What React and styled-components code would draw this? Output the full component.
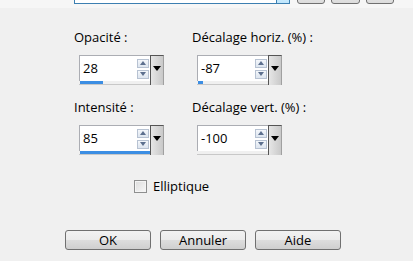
import React from "react";
import styled, { createGlobalStyle } from "styled-components";

const Global = createGlobalStyle`
  html, body {
    margin: 0;
    padding: 0;
    background: #f0f0f0;
    font-family: "Open Sans", "Noto Sans", "DejaVu Sans", sans-serif;
    font-size: 13px;
    color: #000;
  }
`;

const Page = styled.div`
  width: 413px;
  height: 261px;
  overflow: hidden;
  background: #f0f0f0;
  display: flex;
  flex-direction: column;
`;

const TopStrip = styled.div`
  height: 8px;
  background: #f6f6f6;
  display: flex;
  padding-left: 74px;
`;

const TopRow = styled.div`
  display: flex;
  align-self: flex-start;
  margin-top: -17px;
  gap: 7px;
`;

const TopCombo = styled.div`
  width: 214px;
  height: 19px;
  border: 1px solid #3c7fb1;
  background: #fff;
  display: flex;
  justify-content: flex-end;
`;

const TopComboBtn = styled.div`
  width: 12px;
  border-left: 1px solid #3c7fb1;
  background: linear-gradient(#eaf6fd, #bee6fd);
`;

const TopBtns = styled.div`
  display: flex;
  gap: 6px;
`;

const TopBtn = styled.div`
  width: ${(p) => p.w}px;
  height: 19px;
  border: 1px solid #707070;
  border-radius: 3px;
  background: linear-gradient(#f2f2f2, #dcdcdc);
`;

const Form = styled.div`
  padding: 21px 0 0 74px;
  display: grid;
  grid-template-columns: 118px 118px;
  row-gap: 14px;
`;

const Field = styled.div`
  display: flex;
  flex-direction: column;
`;

const Label = styled.div`
  line-height: 16px;
  height: 16px;
  margin-bottom: 10px;
  white-space: nowrap;
`;

const Spin = styled.div`
  margin-left: 5px;
  width: 85px;
  height: 30px;
  display: flex;
  flex-direction: column;
  box-sizing: border-box;
  border-bottom: 1px solid #c8c8c8;
`;

const SpinTop = styled.div`
  display: flex;
  height: 26px;
`;

const Box = styled.div`
  flex: 1;
  display: flex;
  align-items: center;
  background: #fff;
  border: 1px solid #abadb3;
  border-right: none;
  border-bottom: none;
  padding-left: 3px;
`;

const Value = styled.span`
  flex: 1;
  line-height: 16px;
  margin-top: -2px;
`;

const Arrows = styled.div`
  width: 12px;
  display: flex;
  flex-direction: column;
  gap: 2px;
  margin-right: 1px;
`;

const ArrowBtn = styled.div`
  height: 9px;
  border: 1px solid #b7c2d2;
  background: linear-gradient(#f4f7fb, #dde5ef);
  display: flex;
  align-items: center;
  justify-content: center;
  box-sizing: border-box;

  &::after {
    content: "";
    border-left: 3.5px solid transparent;
    border-right: 3.5px solid transparent;
    ${(p) =>
      p.up
        ? "border-bottom: 4px solid #5c6f8e;"
        : "border-top: 4px solid #5c6f8e;"}
  }
`;

const Drop = styled.div`
  width: 12px;
  height: 29px;
  margin-bottom: -3px;
  border-left: 1px solid #555;
  border-top: 1px solid #555;
  border-right: 1px solid #a0a0a0;
  background: linear-gradient(90deg, #e6e6e6, #c9c9c9);
  display: flex;
  align-items: center;
  justify-content: center;
  position: relative;
  z-index: 1;

  &::after {
    content: "";
    margin-top: -4px;
    border-left: 4px solid transparent;
    border-right: 4px solid transparent;
    border-top: 5px solid #000;
  }
`;

const Track = styled.div`
  height: 3px;
  margin-left: 1px;
  width: 83px;
`;

const Fill = styled.div`
  height: 3px;
  background: #3c8ee3;
`;

const CheckRow = styled.label`
  display: flex;
  align-items: center;
  gap: 6px;
  padding-left: 134px;
  margin-top: 23px;
  height: 16px;
`;

const CheckBox = styled.span`
  width: 11px;
  height: 11px;
  border: 1px solid #8e8f8f;
  background: linear-gradient(135deg, #dcdcdc, #f8f8f8);
  box-shadow: inset 0 0 0 1px #f4f4f4;
`;

const Buttons = styled.div`
  display: flex;
  gap: 9px;
  padding-left: 65px;
  margin-top: 36px;
`;

const Button = styled.button`
  width: 86px;
  height: 20px;
  border: 1px solid #707070;
  border-radius: 3px;
  background: linear-gradient(#f2f2f2 0%, #ebebeb 50%, #dddddd 51%, #cfcfcf 100%);
  font: inherit;
  line-height: 16px;
  padding: 0;
  color: #000;
`;

const fields = [
  { label: "Opacité :", value: "28", pct: 28 },
  { label: "Décalage horiz. (%) :", value: "-87", pct: 6.5 },
  { label: "Intensité :", value: "85", pct: 85 },
  { label: "Décalage vert. (%) :", value: "-100", pct: 0 },
];

function Spinner({ value, pct }) {
  return (
    <Spin>
      <SpinTop>
        <Box>
          <Value>{value}</Value>
          <Arrows>
            <ArrowBtn up />
            <ArrowBtn />
          </Arrows>
        </Box>
        <Drop />
      </SpinTop>
      <Track>
        <Fill style={{ width: `${pct}%` }} />
      </Track>
    </Spin>
  );
}

export default function App() {
  return (
    <Page>
      <Global />
      <TopStrip>
        <TopRow>
          <TopCombo>
            <TopComboBtn />
          </TopCombo>
          <TopBtns>
            <TopBtn w={26} />
            <TopBtn w={27} />
            <TopBtn w={26} />
          </TopBtns>
        </TopRow>
      </TopStrip>
      <Form>
        {fields.map((f) => (
          <Field key={f.label}>
            <Label>{f.label}</Label>
            <Spinner value={f.value} pct={f.pct} />
          </Field>
        ))}
      </Form>
      <CheckRow>
        <CheckBox />
        Elliptique
      </CheckRow>
      <Buttons>
        <Button>OK</Button>
        <Button>Annuler</Button>
        <Button>Aide</Button>
      </Buttons>
    </Page>
  );
}
